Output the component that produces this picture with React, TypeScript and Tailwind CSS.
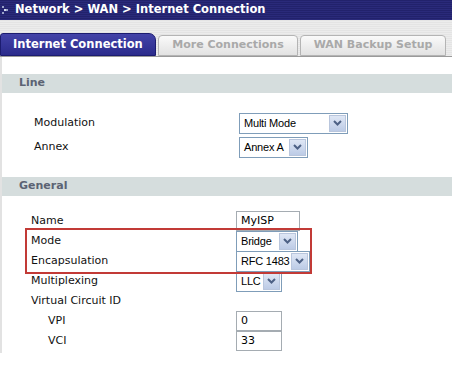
import React from "react";

const label = "font-['DejaVu_Sans',Verdana,sans-serif] text-[11px] text-[#111]";

function Arrow() {
  return (
    <span className="flex h-[17px] w-[17px] shrink-0 items-center justify-center border border-[#b9c6dd] bg-gradient-to-b from-[#dfe7f5] to-[#bccbe6]">
      <svg width="9" height="6" viewBox="0 0 9 6">
        <path d="M1 1 L4.5 4.5 L8 1" fill="none" stroke="#4d6185" strokeWidth="2" />
      </svg>
    </span>
  );
}

function Select({ value, width }: { value: string; width: number }) {
  return (
    <div
      className="flex h-[21px] items-center justify-between border border-[#7f9db9] bg-white pl-[4px] pr-[1px]"
      style={{ width }}
    >
      <span className="whitespace-nowrap font-['Liberation_Sans',Arial,sans-serif] text-[11px] tracking-[-0.2px] text-black">
        {value}
      </span>
      <Arrow />
    </div>
  );
}

function Input({ value, width }: { value: string; width: number }) {
  return (
    <div
      className="flex h-[20px] items-center border border-[#a5acb2] bg-white px-[4px] font-['DejaVu_Sans',Verdana,sans-serif] text-[11px] text-black"
      style={{ width }}
    >
      {value}
    </div>
  );
}

function Row({ name, indent = 0, children }: { name: string; indent?: number; children?: React.ReactNode }) {
  return (
    <div className="flex h-[20px] items-center">
      <div className={label} style={{ width: 205, paddingLeft: indent }}>{name}</div>
      {children}
    </div>
  );
}

function Section({ title }: { title: string }) {
  return (
    <div className="flex h-[19px] items-center bg-[#d5dddd] pl-[17px] font-['DejaVu_Sans',Verdana,sans-serif] text-[11px] font-bold text-[#5b6373]">
      {title}
    </div>
  );
}

export default function App() {
  return (
    <div className="h-[380px] w-[452px] overflow-hidden bg-white">
      {/* breadcrumb bar */}
      <div className="flex h-[20px] items-center gap-[6px] bg-[repeating-linear-gradient(180deg,#22226c_0px,#22226c_1px,#2a2a7a_1px,#2a2a7a_2px)] pl-[2px]">
        <svg width="7" height="8" viewBox="0 0 7 8">
          <rect x="0" y="0" width="2" height="2" fill="#9aa3c8" />
          <rect x="2" y="3" width="2" height="2" fill="#d6dbef" />
          <rect x="0" y="6" width="2" height="2" fill="#9aa3c8" />
          <rect x="4" y="3" width="2" height="2" fill="#9aa3c8" />
        </svg>
        <span className="font-['DejaVu_Sans',Verdana,sans-serif] text-[11.5px] font-bold text-white">
          Network &gt; WAN &gt; Internet Connection
        </span>
      </div>

      {/* tabs */}
      <div className="flex h-[37px] items-end border-b border-[#9a9a9a] bg-[repeating-linear-gradient(180deg,#e4e4e4_0px,#e4e4e4_1px,#ececec_1px,#ececec_2px)]">
        <div className="flex h-[23px] w-[156px] items-center rounded-tr-[7px] rounded-tl-[3px] border border-[#1c1c70] bg-gradient-to-b from-[#4343a8] to-[#2b2b8c] pl-[12px] font-['DejaVu_Sans',Verdana,sans-serif] text-[11.5px] font-bold text-white">
          Internet Connection
        </div>
        <div className="ml-[2px] flex h-[21px] w-[140px] items-center justify-center rounded-t-[4px] border border-[#b4b4b4] bg-gradient-to-b from-[#fafafa] to-[#e2e2e2] font-['DejaVu_Sans',Verdana,sans-serif] text-[11px] font-bold text-[#a9a9a9]">
          More Connections
        </div>
        <div className="ml-[2px] flex h-[21px] w-[146px] items-center justify-center rounded-t-[4px] border border-[#b4b4b4] bg-gradient-to-b from-[#fafafa] to-[#e2e2e2] font-['DejaVu_Sans',Verdana,sans-serif] text-[11px] font-bold text-[#a9a9a9]">
          WAN Backup Setup
        </div>
      </div>

      {/* content */}
      <div className="border-l-2 border-[#e2e2e2] pb-[2px]">
        <div className="h-[17px]" />
        <Section title="Line" />
        <div className="flex flex-col gap-[4px] pl-[32px] pt-[20px]">
          <Row name="Modulation">
            <Select value="Multi Mode" width={109} />
          </Row>
          <Row name="Annex">
            <Select value="Annex A" width={69} />
          </Row>
        </div>
        <div className="h-[20px]" />
        <Section title="General" />
        <div className="pl-[23px] pt-[15px]">
          <div className="pl-[6px]">
            <Row name="Name">
              <Input value="MyISP" width={64} />
            </Row>
          </div>
          <div className="relative -my-[3px] w-[287px] border-2 border-[#c23a36] py-px pl-[4px]">
            <Row name="Mode">
              <Select value="Bridge" width={62} />
            </Row>
            <Row name="Encapsulation">
              <Select value="RFC 1483" width={74} />
            </Row>
          </div>
          <div className="pl-[6px]">
            <Row name="Multiplexing">
              <Select value="LLC" width={46} />
            </Row>
            <Row name="Virtual Circuit ID" />
            <Row name="VPI" indent={17}>
              <Input value="0" width={46} />
            </Row>
            <Row name="VCI" indent={17}>
              <Input value="33" width={46} />
            </Row>
          </div>
        </div>
      </div>
    </div>
  );
}
